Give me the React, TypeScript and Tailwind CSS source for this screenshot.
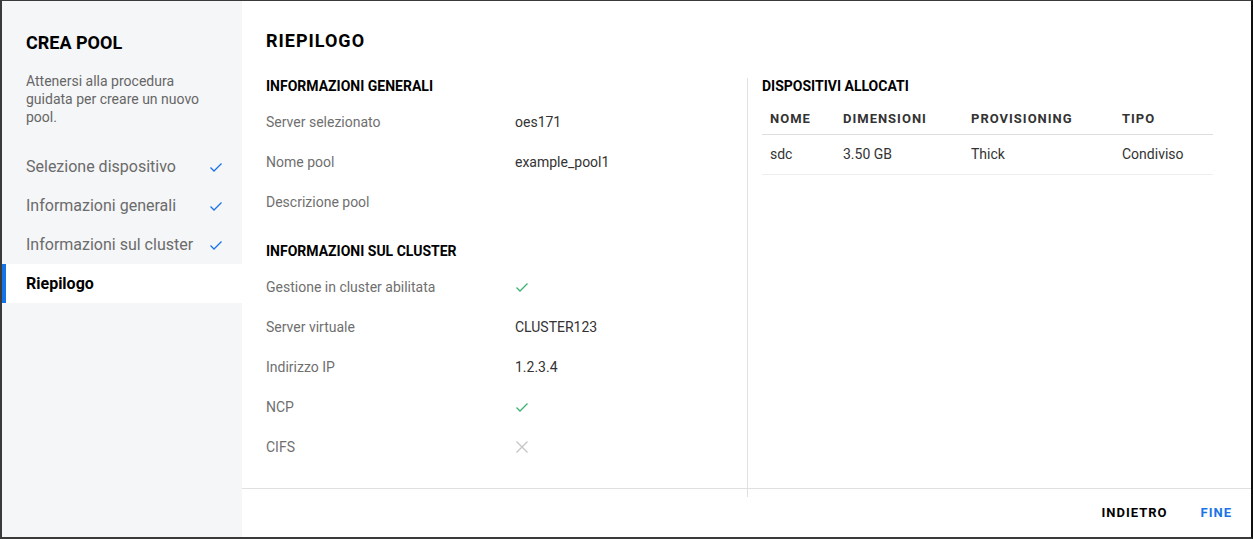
import React from "react";

const Check = ({ className }: { className?: string }) => (
  <svg width="14" height="14" viewBox="0 0 14 14" className={className} fill="none">
    <path d="M1.5 7.5 L5 11 L12.5 3.5" stroke="currentColor" strokeWidth="1.3" />
  </svg>
);

const Cross = () => (
  <svg width="14" height="14" viewBox="0 0 14 14" fill="none" className="text-[#c4c4c4]">
    <path d="M1.5 1.5 L12.5 12.5 M12.5 1.5 L1.5 12.5" stroke="currentColor" strokeWidth="1.3" />
  </svg>
);

const Row = ({ label, children }: { label: string; children?: React.ReactNode }) => (
  <div className="flex h-[40px] items-center text-[14px]">
    <div className="w-[249px] text-[#6f6f6f]">{label}</div>
    <div className="text-[#333333] flex items-center">{children}</div>
  </div>
);

export default function App() {
  const steps = ["Selezione dispositivo", "Informazioni generali", "Informazioni sul cluster"];
  return (
    <div
      className="w-[1253px] h-[539px] flex bg-white border-t border-l-2 border-b-2 border-r-2 border-t-[#3a3a3a] border-l-[#3a3a3a] border-b-[#3a3a3a] border-r-[#111111] overflow-hidden"
      style={{ fontFamily: "Roboto, 'Liberation Sans', sans-serif" }}
    >
      {/* Sidebar */}
      <div className="w-[240px] shrink-0 bg-[#f5f6f8] flex flex-col pt-[30px]">
        <div className="pl-[24px] text-[18px] leading-[24px] font-bold text-black">CREA POOL</div>
        <div className="pl-[24px] pr-[20px] mt-[17px] text-[14px] leading-[18px] text-[#666666]">
          Attenersi alla procedura guidata per creare un nuovo pool.
        </div>
        <div className="mt-[21px] flex flex-col">
          {steps.map((s) => (
            <div key={s} className="h-[39px] flex items-center pl-[24px] pr-[19px] justify-between">
              <span className="text-[16px] text-[#6b6b6b]">{s}</span>
              <Check className="text-[#1a73e8]" />
            </div>
          ))}
          <div className="h-[39px] flex items-center bg-white border-l-4 border-[#1473e6] pl-[20px]">
            <span className="text-[16px] font-bold text-black">Riepilogo</span>
          </div>
        </div>
      </div>

      {/* Main */}
      <div className="flex-1 flex flex-col">
        <div className="pl-[24px] pt-[28px] text-[18px] leading-[24px] font-bold tracking-[1px] text-black">
          RIEPILOGO
        </div>
        <div className="mt-[25px] flex flex-1">
          <div className="w-[505px] shrink-0 pl-[24px]">
            <div className="text-[14px] leading-[17px] font-bold text-black">INFORMAZIONI GENERALI</div>
            <div className="mt-[7px]">
              <Row label="Server selezionato">oes171</Row>
              <Row label="Nome pool">example_pool1</Row>
              <Row label="Descrizione pool" />
            </div>
            <div className="mt-[21px] text-[14px] leading-[17px] font-bold text-black">INFORMAZIONI SUL CLUSTER</div>
            <div className="mt-[7px]">
              <Row label="Gestione in cluster abilitata">
                <Check className="text-[#3cb371]" />
              </Row>
              <Row label="Server virtuale">CLUSTER123</Row>
              <Row label="Indirizzo IP">1.2.3.4</Row>
              <Row label="NCP">
                <Check className="text-[#3cb371]" />
              </Row>
              <Row label="CIFS">
                <Cross />
              </Row>
            </div>
          </div>
          <div className="flex-1 border-l border-[#e0e0e0] pl-[14px] pr-[38px]">
            <div className="text-[14px] leading-[17px] font-bold text-black">DISPOSITIVI ALLOCATI</div>
            <div className="mt-[8px] w-[451px]">
              <div className="flex h-[32px] pt-[1px] items-center border-b border-[#dddddd] text-[13px] font-bold tracking-[1px] text-[#333333]">
                <div className="w-[73px] pl-[8px]">NOME</div>
                <div className="w-[128px] pl-[8px]">DIMENSIONI</div>
                <div className="w-[151px] pl-[8px]">PROVISIONING</div>
                <div className="flex-1 pl-[8px]">TIPO</div>
              </div>
              <div className="flex h-[40px] items-center border-b border-[#eeeeee] text-[14px] text-[#333333]">
                <div className="w-[73px] pl-[8px]">sdc</div>
                <div className="w-[128px] pl-[8px]">3.50 GB</div>
                <div className="w-[151px] pl-[8px]">Thick</div>
                <div className="flex-1 pl-[8px]">Condiviso</div>
              </div>
            </div>
          </div>
        </div>
        <div className="-mt-[9px] h-[49px] shrink-0 border-t border-[#e0e0e0] flex items-center justify-end pr-[19px] gap-[33px]">
          <button className="text-[13px] font-bold tracking-[1px] text-black">INDIETRO</button>
          <button className="text-[13px] font-bold tracking-[1px] text-[#1a73e8]">FINE</button>
        </div>
      </div>
    </div>
  );
}
